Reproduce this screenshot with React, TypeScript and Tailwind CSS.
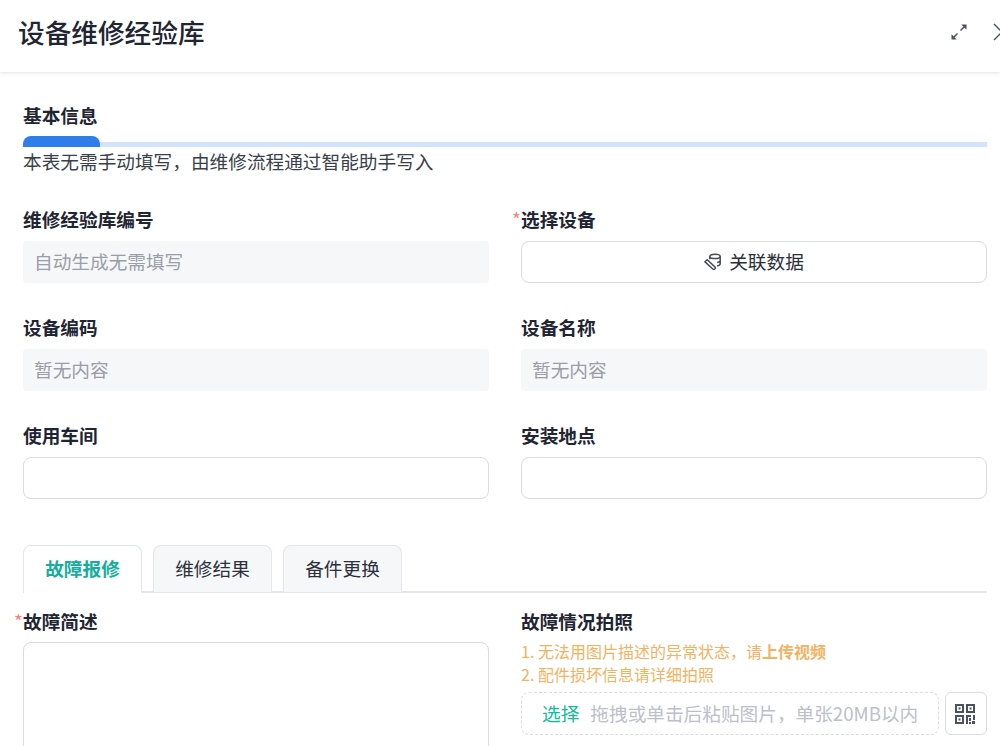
import React from "react";

const font = { fontFamily: '"Noto Sans CJK SC","Noto Sans",sans-serif' };

function Label({ children, req }: { children: React.ReactNode; req?: boolean }) {
  return (
    <div className="relative h-[22px] text-[18.67px] leading-[20px] font-semibold text-[#1f2533]">
      {req && <span className="absolute left-[-9px] top-0 text-[18.67px] font-normal text-[#f77f7f]">*</span>}
      {children}
    </div>
  );
}

function Field({ label, value, req, children }: { label: string; value?: string; req?: boolean; children?: React.ReactNode }) {
  return (
    <div className="flex flex-col gap-[10px]">
      <Label req={req}>{label}</Label>
      {children ??
        (value ? (
          <div className="flex h-[42px] items-center rounded-[4px] bg-[#f6f7f9] px-[11px] pb-[2px] text-[18.67px] text-[#9a9ea8]">{value}</div>
        ) : (
          <div className="h-[42px] rounded-[8px] border border-[#d9dce3] bg-white" />
        ))}
    </div>
  );
}

function Tab({ children, active }: { children: React.ReactNode; active?: boolean }) {
  return (
    <div
      className={
        active
          ? "relative z-10 flex h-[48px] w-[119px] items-center justify-center rounded-t-[8px] border border-b-0 border-[#e4e6eb] bg-white pb-[3px] text-[18.67px] font-semibold text-[#14ae9c]"
          : "flex h-[47px] w-[119px] items-center justify-center rounded-t-[8px] border border-b-0 border-[#e4e6eb] bg-[#f6f7f9] pb-[2px] text-[18.67px] text-[#2b303b]"
      }
    >
      {children}
    </div>
  );
}

export default function App() {
  return (
    <div className="h-[746px] w-[1000px] overflow-hidden bg-white" style={font}>
      <header className="flex h-[72px] items-center justify-between pb-[6px] pl-[18px] shadow-[0_1px_4px_rgba(0,0,0,0.12)]">
        <h1 className="mb-[2px] text-[26.67px] font-medium leading-[30px] text-[#1f2533]">设备维修经验库</h1>
        <div className="mb-[2px] mr-[-12px] flex items-center gap-[25px]">
          <svg width="16" height="16" viewBox="0 0 16 16" fill="none" stroke="#4b5160" strokeWidth="1.4">
            <path d="M9.5 6.5 14 2" />
            <path d="M6.5 9.5 2 14" />
            <path d="M15.5.5v5.2L10.3.5zM.5 15.5v-5.2l5.2 5.2z" fill="#4b5160" stroke="none" />
          </svg>
          <svg width="20" height="20" viewBox="0 0 20 20" fill="none" stroke="#4b5160" strokeWidth="1.4">
            <path d="M2 2l16 16M18 2 2 18" />
          </svg>
        </div>
      </header>

      <main className="pl-[23px] pr-[13px] pt-[33px]">
        <div className="h-[22px] text-[18.67px] leading-[20px] font-semibold text-[#1f2533]">基本信息</div>
        <div className="relative mt-[9px] h-[11px]">
          <div className="absolute inset-x-0 bottom-0 h-[5px] bg-[#d3e3fd]" />
          <div className="absolute bottom-0 left-0 h-[11px] w-[77px] rounded-t-[8px] bg-[#2f7de8]" />
        </div>
        <p className="mt-[4px] h-[22px] text-[18.67px] leading-[20px] text-[#3a3f4b]">本表无需手动填写，由维修流程通过智能助手写入</p>

        <div className="mt-[36px] grid grid-cols-2 gap-x-[32px] gap-y-[34px]">
          <Field label="维修经验库编号" value="自动生成无需填写" />
          <Field label="选择设备" req>
            <div className="flex h-[42px] items-center justify-center gap-[7px] rounded-[8px] border border-[#d9dce3] bg-white pb-[2px] text-[18.67px] text-[#2b303b]">
              <svg width="18" height="18" viewBox="0 0 18 18" fill="none" stroke="#444a56" strokeWidth="1.5" className="mt-[2px]">
                <ellipse cx="11" cy="3.4" rx="5.2" ry="2.2" />
                <path d="M5.8 3.4v2.8M16.2 3.4v7.4c0 1.2-1.4 1.9-3.2 2.1M16.2 7.5c0 1-1.4 1.7-3 1.9" />
                <path d="m1 8.8 2.2-2 7.8 7.2a1.5 1.5 0 0 1-2.2 2z" />
              </svg>
              关联数据
            </div>
          </Field>
          <Field label="设备编码" value="暂无内容" />
          <Field label="设备名称" value="暂无内容" />
          <Field label="使用车间" />
          <Field label="安装地点" />
        </div>

        <div className="relative mt-[46px] flex h-[48px] items-start gap-[11px] border-b-2 border-[#e4e6eb]">
          <Tab active>故障报修</Tab>
          <Tab>维修结果</Tab>
          <Tab>备件更换</Tab>
        </div>

        <div className="mt-[18px] grid grid-cols-2 gap-x-[32px]">
          <div className="flex flex-col gap-[9px]">
            <Label req>故障简述</Label>
            <div className="h-[200px] rounded-[8px] border border-[#d9dce3] bg-white" />
          </div>
          <div className="flex flex-col">
            <Label>故障情况拍照</Label>
            <div className="mt-[7px] text-[16px] leading-[23px] text-[#f3b25f]">
              <div>1. 无法用图片描述的异常状态，请<span className="font-bold">上传视频</span></div>
              <div>2. 配件损坏信息请详细拍照</div>
            </div>
            <div className="mt-[6px] flex gap-[6px]">
              <div className="flex h-[43px] flex-1 items-center gap-[11px] rounded-[8px] border border-dashed border-[#d9dce3] pb-[2px] pl-[20px] text-[18.67px]">
                <span className="text-[#12bb9a]">选择</span>
                <span className="whitespace-nowrap text-[#bcc0ca]">拖拽或单击后粘贴图片，单张20MB以内</span>
              </div>
              <div className="flex h-[43px] w-[42px] items-center justify-center rounded-[6px] border border-[#d9dce3] pr-[2px]">
                <svg width="20" height="20" viewBox="0 0 20 20" fill="#4b5160" stroke="none">
                  <path fillRule="evenodd" d="M0 0h9v9H0zM2 2v5h5V2zM11 0h9v9h-9zM13 2v5h5V2zM0 11h9v9H0zM2 13v5h5v-5z" />
                  <path d="M3.5 3.5h2v2h-2zM14.5 3.5h2v2h-2zM3.5 14.5h2v2h-2zM11 11h5v2h-3v7h-2zM14 14h2v3h-2zM14 18h2v2h-2zM18 11h2v5h-2zM17 17h3v3h-3z" />
                </svg>
              </div>
            </div>
          </div>
        </div>
      </main>
    </div>
  );
}
